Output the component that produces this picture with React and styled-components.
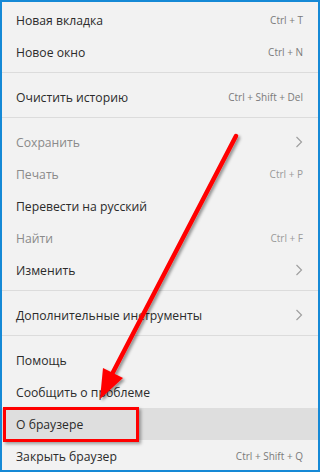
import React from "react";
import styled, { createGlobalStyle } from "styled-components";

const Global = createGlobalStyle`
  html, body { margin: 0; padding: 0; background: #f2f2f2; }
  * { box-sizing: border-box; }
`;

const Menu = styled.div`
  position: relative;
  width: 320px;
  height: 472px;
  border: 2px solid #1589d6;
  background: #f2f2f2;
  overflow: hidden;
  font-family: "Open Sans", "Noto Sans", sans-serif;
  padding-top: 2px;
`;

const Group = styled.div`
  display: flex;
  flex-direction: column;
`;

const Separator = styled.div`
  height: 1px;
  background: #dcdcdc;
  margin: 4px 0 8px;
`;

const Row = styled.div`
  position: relative;
  height: 32px;
  flex: none;
  display: flex;
  align-items: center;
  justify-content: space-between;
  padding: 0 14px 0 14px;
  background: ${(p) => (p.$active ? "#dedede" : "transparent")};
`;

const Label = styled.span`
  font-size: 12.2px;
  color: ${(p) => (p.$disabled ? "#8a8a8a" : "#2b2b2b")};
`;

const Shortcut = styled.span`
  font-size: 10px;
  color: ${(p) => (p.$disabled ? "#9a9a9a" : "#7a7a7a")};
  margin-right: 1px;
`;

const Chevron = styled.svg`
  width: 8px;
  height: 12px;
  margin-right: 1px;
`;

const RedBox = styled.div`
  position: absolute;
  left: 1px;
  top: -1px;
  width: 136px;
  height: 35px;
  border: 3px solid #ff0000;
  box-shadow: 2px 2px 3px rgba(0, 0, 0, 0.35);
  pointer-events: none;
`;

const ArrowLayer = styled.svg`
  position: absolute;
  left: -2px;
  top: -2px;
  width: 320px;
  height: 472px;
  pointer-events: none;
`;

function ChevronRight() {
  return (
    <Chevron viewBox="0 0 8 12">
      <path d="M1.5 1 L6.5 6 L1.5 11" fill="none" stroke="#a0a0a0" strokeWidth="1.2" />
    </Chevron>
  );
}

const groups = [
  [
    { label: "Новая вкладка", sc: "Ctrl + T" },
    { label: "Новое окно", sc: "Ctrl + N" },
  ],
  [{ label: "Очистить историю", sc: "Ctrl + Shift + Del" }],
  [
    { label: "Сохранить", disabled: true, sub: true },
    { label: "Печать", disabled: true, sc: "Ctrl + P" },
    { label: "Перевести на русский" },
    { label: "Найти", disabled: true, sc: "Ctrl + F" },
    { label: "Изменить", sub: true },
  ],
  [{ label: "Дополнительные инструменты", sub: true }],
  [
    { label: "Помощь" },
    { label: "Сообщить о проблеме" },
    { label: "О браузере", active: true },
    { label: "Закрыть браузер", sc: "Ctrl + Shift + Q" },
  ],
];

export default function App() {
  return (
    <>
      <Global />
      <Menu>
        {groups.map((g, gi) => (
          <React.Fragment key={gi}>
            {gi > 0 && <Separator />}
            <Group>
              {g.map((it) => (
                <Row key={it.label} $active={it.active}>
                  <Label $disabled={it.disabled}>{it.label}</Label>
                  {it.sc && <Shortcut $disabled={it.disabled}>{it.sc}</Shortcut>}
                  {it.sub && <ChevronRight />}
                  {it.active && <RedBox />}
                </Row>
              ))}
            </Group>
          </React.Fragment>
        ))}
        <ArrowLayer viewBox="0 0 320 472">
          <defs>
            <filter id="sh" x="-20%" y="-20%" width="140%" height="140%">
              <feDropShadow dx="2" dy="2" stdDeviation="1.8" floodColor="#000" floodOpacity="0.4" />
            </filter>
          </defs>
          <g filter="url(#sh)">
            <line x1="236" y1="136" x2="110" y2="378" stroke="#ff0000" strokeWidth="4.5" strokeLinecap="round" />
            <polygon points="100,399 103,368 123,378" fill="#ff0000" />
          </g>
        </ArrowLayer>
      </Menu>
    </>
  );
}
